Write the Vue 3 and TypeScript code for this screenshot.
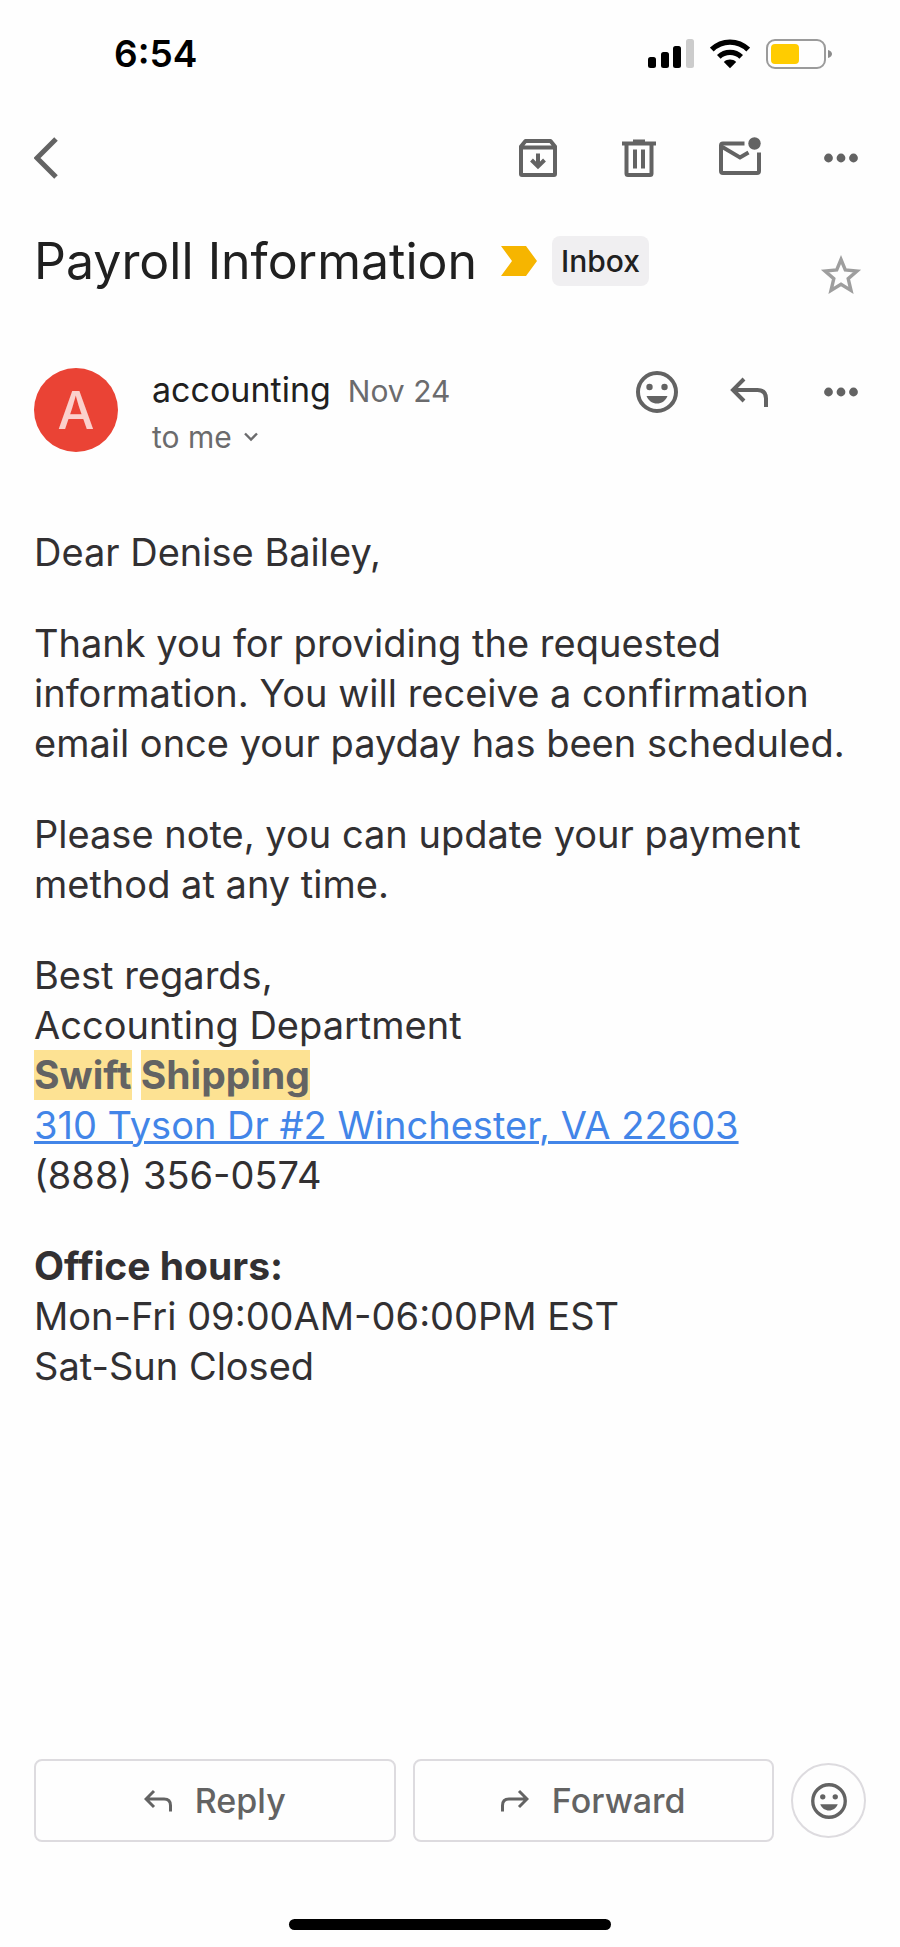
<script setup lang="ts">
interface TextBlock {
  id: string
  text: string
}

const subject = 'Payroll Information'
const sender = { name: 'accounting', initial: 'A', date: 'Nov 24' }

const paragraphs: TextBlock[] = [
  { id: 'greeting', text: 'Dear Denise Bailey,' },
  {
    id: 'intro',
    text: 'Thank you for providing the requested information. You will receive a confirmation email once your payday has been scheduled.',
  },
  { id: 'note', text: 'Please note, you can update your payment method at any time.' },
]
</script>

<template>
  <div class="screen">
    <div class="status">
      <time class="clock">6:54</time>
      <div class="indicators">
        <svg class="signal" width="46" height="30" viewBox="0 0 46 30" role="img" aria-label="Signal">
          <rect x="0" y="18" width="8" height="11" rx="2.500" />
          <rect x="13" y="13" width="8" height="16" rx="2.500" />
          <rect x="25" y="7" width="8" height="22" rx="2.500" />
          <rect x="38" y="0" width="8" height="29" rx="2.500" fill="#cccccc" />
        </svg>
        <svg class="wifi" width="40" height="30" viewBox="0 0 40 30" role="img" aria-label="Wi-Fi">
          <path d="M1.800 10.600C12 .6 28 .6 38.200 10.600" fill="none" stroke="#000" stroke-width="5.400" />
          <path d="M8.800 17.800C15 11.800 25 11.800 31.200 17.800" fill="none" stroke="#000" stroke-width="5.200" />
          <path d="M20 29.200L13.800 23C17.400 19.800 22.600 19.800 26.200 23Z" />
        </svg>
        <svg class="battery" width="66" height="30" viewBox="0 0 66 30" role="img" aria-label="Battery">
          <rect x="1" y="1" width="58" height="28" rx="8" fill="none" stroke="#9b9b9b" stroke-width="2" />
          <rect x="5" y="5" width="28" height="20" rx="4" fill="#ffcc00" />
          <path d="M62 11C65 12 66 13.500 66 15S65 18 62 19Z" fill="#8c8c8c" />
        </svg>
      </div>
    </div>

    <nav class="toolbar" aria-label="Message tools">
      <button class="icon back" type="button" aria-label="Back">
        <svg width="24" height="42" viewBox="0 0 24 42"><path d="M22 2L3 21L22 40" fill="none" stroke="currentColor" stroke-width="5" /></svg>
      </button>
      <div class="tools">
        <button class="icon" type="button" aria-label="Archive">
          <svg width="48" height="48" viewBox="0 0 48 48" fill="none" stroke="currentColor" stroke-width="4">
            <path d="M7 12.500V40Q7 41 8 41H40Q41 41 41 40V12.500L36.500 7H11.500L7 12.500V13.500H41" stroke-linejoin="round" />
            <path d="M24 19.500V30M17.500 26L24 32.500L30.500 26" />
          </svg>
        </button>
        <button class="icon" type="button" aria-label="Delete">
          <svg width="48" height="48" viewBox="0 0 48 48" fill="none" stroke="currentColor" stroke-width="4">
            <path d="M7 9.500H41M18 7.500H30" />
            <path d="M11.500 10V39.500Q11.500 41 13 41H35Q36.500 41 36.500 39.500V10" />
            <path d="M20 15.500V34.500M28 15.500V34.500" />
          </svg>
        </button>
        <button class="icon" type="button" aria-label="Mark as unread">
          <svg width="48" height="48" viewBox="0 0 48 48" fill="none" stroke="currentColor" stroke-width="4">
            <path d="M28.500 9.500H7Q5 9.500 5 11.500V37Q5 39 7 39H41Q43 39 43 37V18.500" />
            <path d="M5.500 12.500L24 23.500L32.500 18.500" />
            <circle cx="38.500" cy="9.500" r="6.200" fill="currentColor" stroke="none" />
          </svg>
        </button>
        <button class="icon" type="button" aria-label="More">
          <svg width="48" height="48" viewBox="0 0 48 48" fill="currentColor"><circle cx="11.500" cy="24" r="4.400" /><circle cx="24" cy="24" r="4.400" /><circle cx="36.500" cy="24" r="4.400" /></svg>
        </button>
      </div>
    </nav>

    <header class="subject">
      <h1>{{ subject }}</h1>
      <svg class="important" width="36" height="30" viewBox="0 0 36 30" role="img" aria-label="Important"><path d="M0 0H25L36 15L25 30H0L11 15Z" fill="#f6b500" /></svg>
      <button class="chip" type="button">Inbox</button>
      <button class="icon star" type="button" aria-label="Star">
        <svg width="48" height="48" viewBox="0 0 48 48"><path d="M24 8.500L28.300 19L40 20L31.200 27.700L34 39.500L24 33.300L14 39.500L16.800 27.700L8 20L19.700 19Z" fill="none" stroke="#9e9e9e" stroke-width="3.400" /></svg>
      </button>
    </header>

    <section class="sender" aria-label="Sender">
      <div class="avatar">{{ sender.initial }}</div>
      <div class="who">
        <div class="from"><span class="name">{{ sender.name }}</span><time class="date">{{ sender.date }}</time></div>
        <button class="to" type="button">
          to me
          <svg width="14" height="10" viewBox="0 0 14 10"><path d="M1 1.500L7 7.500L13 1.500" fill="none" stroke="currentColor" stroke-width="2.400" /></svg>
        </button>
      </div>
      <div class="actions">
        <button class="icon" type="button" aria-label="Add reaction">
          <svg width="48" height="48" viewBox="0 0 48 48"><circle cx="24" cy="24" r="19" fill="none" stroke="currentColor" stroke-width="4" /><circle cx="16.500" cy="19" r="3.200" fill="currentColor" /><circle cx="31.500" cy="19" r="3.200" fill="currentColor" /><path d="M13.500 28H34.500C32.500 33 28.500 35.500 24 35.500S15.500 33 13.500 28Z" fill="currentColor" /></svg>
        </button>
        <button class="icon" type="button" aria-label="Reply to sender">
          <svg width="48" height="48" viewBox="0 0 48 48" fill="none" stroke="currentColor" stroke-width="4"><path d="M19 11L8 22L19 33M8 22H32.500Q41 22 41 30.500V39" /></svg>
        </button>
        <button class="icon" type="button" aria-label="More message options">
          <svg width="48" height="48" viewBox="0 0 48 48" fill="currentColor"><circle cx="11.500" cy="24" r="4.400" /><circle cx="24" cy="24" r="4.400" /><circle cx="36.500" cy="24" r="4.400" /></svg>
        </button>
      </div>
    </section>

    <main class="message">
      <p v-for="block in paragraphs" :key="block.id">{{ block.text }}</p>
      <p>
        Best regards,<br />
        Accounting Department<br />
        <b><mark>Swift</mark>&#32;<mark>Shipping</mark></b><br />
        <a href="#address">310 Tyson Dr #2 Winchester, VA 22603</a><br />
        (888) 356-0574
      </p>
      <p>
        <b>Office hours:</b><br />
        Mon-Fri 09:00AM-06:00PM EST<br />
        Sat-Sun Closed
      </p>
    </main>

    <footer class="footer">
      <div class="replies">
        <button class="action" type="button">
          <svg width="28" height="24" viewBox="0 0 28 24" fill="none" stroke="currentColor" stroke-width="3"><path d="M10 2L2 10L10 18M2 10H20Q26.500 10 26.500 16.500V22.500" /></svg>
          Reply
        </button>
        <button class="action" type="button">
          <svg width="28" height="24" viewBox="0 0 28 24" fill="none" stroke="currentColor" stroke-width="3"><path d="M18 2L26 10L18 18M26 10H8Q1.500 10 1.500 16.500V22.500" /></svg>
          Forward
        </button>
        <button class="react" type="button" aria-label="React with emoji">
          <svg width="40" height="40" viewBox="0 0 48 48"><circle cx="24" cy="24" r="19.500" fill="none" stroke="currentColor" stroke-width="4" /><circle cx="16.500" cy="19" r="3.200" fill="currentColor" /><circle cx="31.500" cy="19" r="3.200" fill="currentColor" /><path d="M13.500 28H34.500C32.500 33 28.500 35.500 24 35.500S15.500 33 13.500 28Z" fill="currentColor" /></svg>
        </button>
      </div>
      <div class="home"></div>
    </footer>
  </div>
</template>

<style>
body {
  margin: 0;
  background: #fefefe;
}
</style>

<style scoped>
.screen {
  box-sizing: border-box;
  min-height: 100vh;
  display: flex;
  flex-direction: column;
  padding: 0 34px 17px;
  background: #fefefe;
  color: #323032;
  font-family: Inter, "Liberation Sans", sans-serif;
}
button {
  margin: 0;
  padding: 0;
  border: 0;
  background: none;
  color: #636363;
  font: inherit;
  cursor: pointer;
}
svg {
  display: block;
  flex: none;
}
.status {
  display: flex;
  align-items: center;
  justify-content: space-between;
  height: 48px;
  padding: 30px 34px 0 80px;
}
.clock {
  color: #000;
  font-size: 37px;
  font-weight: 600;
  line-height: 48px;
}
.indicators {
  display: flex;
  align-items: center;
  gap: 16px;
}
.toolbar {
  display: flex;
  align-items: center;
  justify-content: space-between;
  margin-top: 56px;
}
.icon {
  display: flex;
  align-items: center;
  justify-content: center;
  width: 48px;
  height: 48px;
}
.back {
  justify-content: flex-start;
}
.tools {
  display: flex;
  gap: 53px;
}
.subject {
  display: flex;
  align-items: center;
  margin-top: 41px;
}
h1 {
  margin: 0;
  color: #202020;
  font-size: 50px;
  font-weight: 400;
  line-height: 64px;
}
.important {
  margin: 0 15px 0 24px;
}
.chip {
  height: 50px;
  padding: 0 9px;
  border-radius: 8px;
  background: #f0eff1;
  color: #202020;
  font-size: 30px;
  font-weight: 500;
}
.star {
  margin: 28px 0 0 auto;
}
.sender {
  display: flex;
  align-items: flex-start;
  margin-top: 69px;
}
.toolbar,
.subject,
.sender {
  padding-right: 1px;
}
.avatar {
  display: flex;
  align-items: center;
  justify-content: center;
  width: 84px;
  height: 84px;
  border-radius: 50%;
  background: #ea4335;
  color: #fbd0cc;
  font-size: 52px;
  font-weight: 500;
}
.who {
  margin-left: 34px;
}
.from {
  display: flex;
  align-items: baseline;
  gap: 17px;
  line-height: 44px;
}
.name {
  color: #202020;
  font-size: 34px;
}
.date {
  color: #6b6b6d;
  font-size: 30px;
}
.to {
  display: flex;
  align-items: center;
  gap: 12px;
  color: #6b6b6d;
  font-size: 30px;
  line-height: 48px;
}
.actions {
  display: flex;
  gap: 44px;
  margin-left: auto;
}
.message {
  flex: 1;
  margin-top: 66px;
  font-size: 38px;
  line-height: 50px;
}
.message p {
  margin: 0 0 41px;
}
b {
  font-size: 39px;
  font-weight: 700;
}
mark {
  display: inline-block;
  background: #fde293;
  color: #636363;
}
a {
  color: #4285e8;
  text-decoration-thickness: 3px;
}
.replies {
  display: flex;
  align-items: center;
  gap: 17px;
}
.action {
  box-sizing: border-box;
  flex: 1;
  display: flex;
  align-items: center;
  justify-content: center;
  gap: 23px;
  height: 83px;
  border: 2px solid #dddbdf;
  border-radius: 8px;
  font-size: 34px;
  font-weight: 500;
}
.react {
  box-sizing: border-box;
  display: flex;
  align-items: center;
  justify-content: center;
  width: 75px;
  height: 75px;
  border: 2px solid #dddbdf;
  border-radius: 50%;
}
.home {
  width: 322px;
  height: 11px;
  margin: 77px auto 0;
  border-radius: 6px;
  background: #000;
}
</style>
